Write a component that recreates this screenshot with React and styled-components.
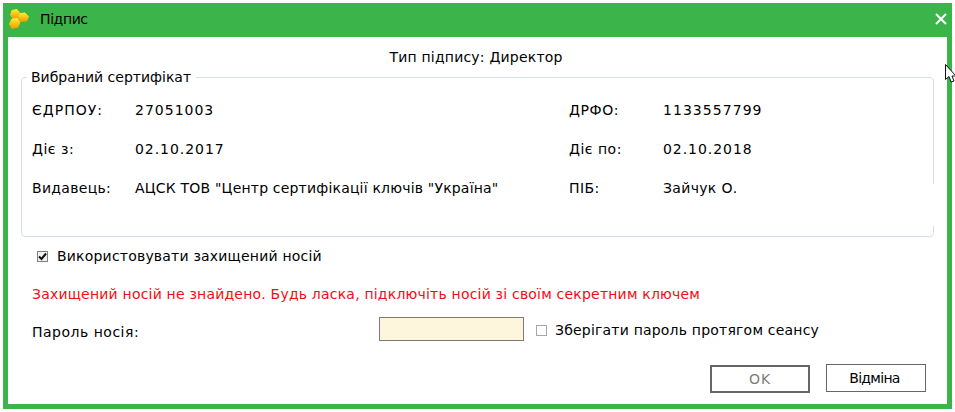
import React from 'react';
import styled, { createGlobalStyle } from 'styled-components';

const GlobalStyle = createGlobalStyle`
  html, body {
    margin: 0;
    padding: 0;
    background: #fff;
  }
  body {
    font-family: "DejaVu Sans", Verdana, sans-serif;
    font-size: 14px;
    letter-spacing: 0.2px;
    color: #000;
  }
`;

const certRows = [
  [['ЄДРПОУ:', 1], ['27051003', 1], ['ДРФО:', 0.6], ['1133557799', 1.05]],
  [['Діє з:', 0.5], ['02.10.2017', 0.95], ['Діє по:', 0.5], ['02.10.2018', 0.95]],
  [['Видавець:', 0.3], ['АЦСК ТОВ "Центр сертифікації ключів "Україна"', 0.19], ['ПІБ:', 0.4], ['Зайчук О.', 0.33]],
];

const Logo = () => (
  <svg width="20" height="20" viewBox="0 0 20 20">
    <defs>
      <linearGradient id="comb" x1="0" y1="0" x2="0" y2="1">
        <stop offset="0" stopColor="#ffe92e" />
        <stop offset="1" stopColor="#f39c00" />
      </linearGradient>
    </defs>
    <path d="M3 1.5 L8 0.5 L10.5 4 L9.5 9 L4 9.5 L1.5 6 Z" fill="url(#comb)" stroke="url(#comb)" strokeLinejoin="round" />
    <path d="M11 4.5 L16 4 L19.5 7.5 L17.5 12 L12 12.5 L9.5 8.5 Z" fill="url(#comb)" stroke="url(#comb)" strokeLinejoin="round" />
    <path d="M3 10 L8.5 9.5 L11 13 L9 18 L3 19.5 L0.5 15 Z" fill="url(#comb)" stroke="url(#comb)" strokeLinejoin="round" />
  </svg>
);

const Pointer = () => (
  <svg width="10" height="19" viewBox="0 0 10 19">
    <path d="M0.5 0.5 L0.5 15.5 L4 12.5 L6 18 L9 17 L7 12 L11 12 Z" fill="#fff" stroke="#111" strokeWidth="1" />
  </svg>
);

export default function App() {
  return (
    <>
      <GlobalStyle />
      <Dialog>
        <TitleBar>
          <Logo />
          <TitleText>Підпис</TitleText>
          <CloseButton viewBox="0 0 12 12">
            <path d="M1 1 L11 11 M11 1 L1 11" stroke="#fff" strokeWidth="2" />
          </CloseButton>
        </TitleBar>
        <Body>
          <SignType>Тип підпису: Директор</SignType>
          <CertBox>
            <CertLegend>Вибраний сертифікат</CertLegend>
            <CertGrid>
              {certRows.map((row) =>
                row.map(([text, spacing]) => (
                  <CertCell key={text} $spacing={spacing}>{text}</CertCell>
                ))
              )}
            </CertGrid>
            <BorderGap />
          </CertBox>
          <CheckRow>
            <CheckBox $checked>
              <svg width="9" height="9" viewBox="0 0 9 9">
                <path d="M1 4.5 L3.5 7 L8 1.5" fill="none" stroke="#111" strokeWidth="2" />
              </svg>
            </CheckBox>
            Використовувати захищений носій
          </CheckRow>
          <ErrorText>Захищений носій не знайдено. Будь ласка, підключіть носій зі своїм секретним ключем</ErrorText>
          <PasswordRow>
            <PasswordLabel>Пароль носія:</PasswordLabel>
            <PasswordInput />
            <SaveOption>
              <CheckBox />
              Зберігати пароль протягом сеансу
            </SaveOption>
          </PasswordRow>
          <Actions>
            <OkButton disabled>OK</OkButton>
            <CancelButton>Відміна</CancelButton>
          </Actions>
        </Body>
      </Dialog>
      <CursorMark>
        <Pointer />
      </CursorMark>
    </>
  );
}

const Dialog = styled.div`
  box-sizing: border-box;
  width: 949px;
  height: 406px;
  margin: 3px 0 0 3px;
  border: 5px solid #3bb54a;
  border-top: 0;
  display: flex;
  flex-direction: column;
`;

const TitleBar = styled.div`
  height: 34px;
  flex: none;
  background: #3bb54a;
  margin: 0 -5px;
  padding: 0 5px 2px 6px;
  box-sizing: border-box;
  display: flex;
  align-items: center;
`;

const TitleText = styled.span`
  margin-left: 11px;
  letter-spacing: -0.4px;
`;

const CloseButton = styled.svg`
  width: 12px;
  height: 12px;
  margin-left: auto;
`;

const Body = styled.div`
  flex: 1;
  background: #fff;
  padding: 11px 13px 0 13px;
  display: flex;
  flex-direction: column;
`;

const SignType = styled.div`
  text-align: center;
  height: 18px;
  line-height: 18px;
  margin-right: 3px;
`;

const CertBox = styled.fieldset`
  position: relative;
  box-sizing: border-box;
  height: 168px;
  margin: 3px 0 0;
  padding: 0 0 0 10px;
  border: 1px solid #d7dfe6;
  border-radius: 4px;
`;

const CertLegend = styled.legend`
  padding: 0 5px 0 4px;
  margin-left: -5px;
  line-height: 16px;
  letter-spacing: 0;
`;

const CertGrid = styled.div`
  display: grid;
  grid-template-columns: 103px 434px 94px 1fr;
  grid-auto-rows: 39px;
  align-items: center;
  padding-top: 5px;
`;

const CertCell = styled.span`
  letter-spacing: ${(p) => p.$spacing}px;
`;

// the right edge of the frame is broken for a stretch in the original
const BorderGap = styled.span`
  position: absolute;
  right: -1px;
  top: 99px;
  width: 1px;
  height: 42px;
  background: #fff;
`;

const CheckRow = styled.label`
  display: flex;
  align-items: center;
  gap: 9px;
  margin: 10px 0 0 16px;
  height: 18px;
`;

const CheckBox = styled.span`
  box-sizing: border-box;
  width: 11px;
  height: 11px;
  border: 1px solid ${(p) => (p.$checked ? '#808080' : '#a6a6a6')};
  background: ${(p) => (p.$checked ? '#f0f0f0' : '#fff')};
  display: inline-flex;
  align-items: center;
  justify-content: center;
`;

const ErrorText = styled.div`
  color: #f50a14;
  margin: 20px 0 0 11px;
  height: 18px;
  line-height: 18px;
`;

const PasswordRow = styled.div`
  display: flex;
  align-items: center;
  margin: 14px 0 0 11px;
`;

const PasswordLabel = styled.span`
  width: 347px;
  padding-top: 6px;
  letter-spacing: 0.5px;
`;

const PasswordInput = styled.input`
  box-sizing: border-box;
  width: 145px;
  height: 24px;
  border: 1px solid #7f7b72;
  background: #fef6dc;
  padding: 0;
  outline: none;
`;

const SaveOption = styled.label`
  display: flex;
  align-items: center;
  gap: 8px;
  margin-left: 12px;
  padding-top: 2px;
`;

const Actions = styled.div`
  display: flex;
  justify-content: flex-end;
  align-items: flex-start;
  gap: 16px;
  margin-top: 23px;
  margin-right: 8px;
`;

const BaseButton = styled.button`
  box-sizing: border-box;
  width: 100px;
  height: 28px;
  background: #fff;
  font-family: inherit;
  font-size: 14px;
  padding: 0;
`;

const OkButton = styled(BaseButton)`
  border: 2px solid #666;
  color: #7d7d7d;
  margin-top: 1px;
  letter-spacing: 1px;
`;

const CancelButton = styled(BaseButton)`
  border: 1px solid #666;
  color: #000;
  letter-spacing: -0.7px;
  padding-right: 3px;
`;

const CursorMark = styled.div`
  position: absolute;
  left: 945px;
  top: 64px;
  line-height: 0;
`;
